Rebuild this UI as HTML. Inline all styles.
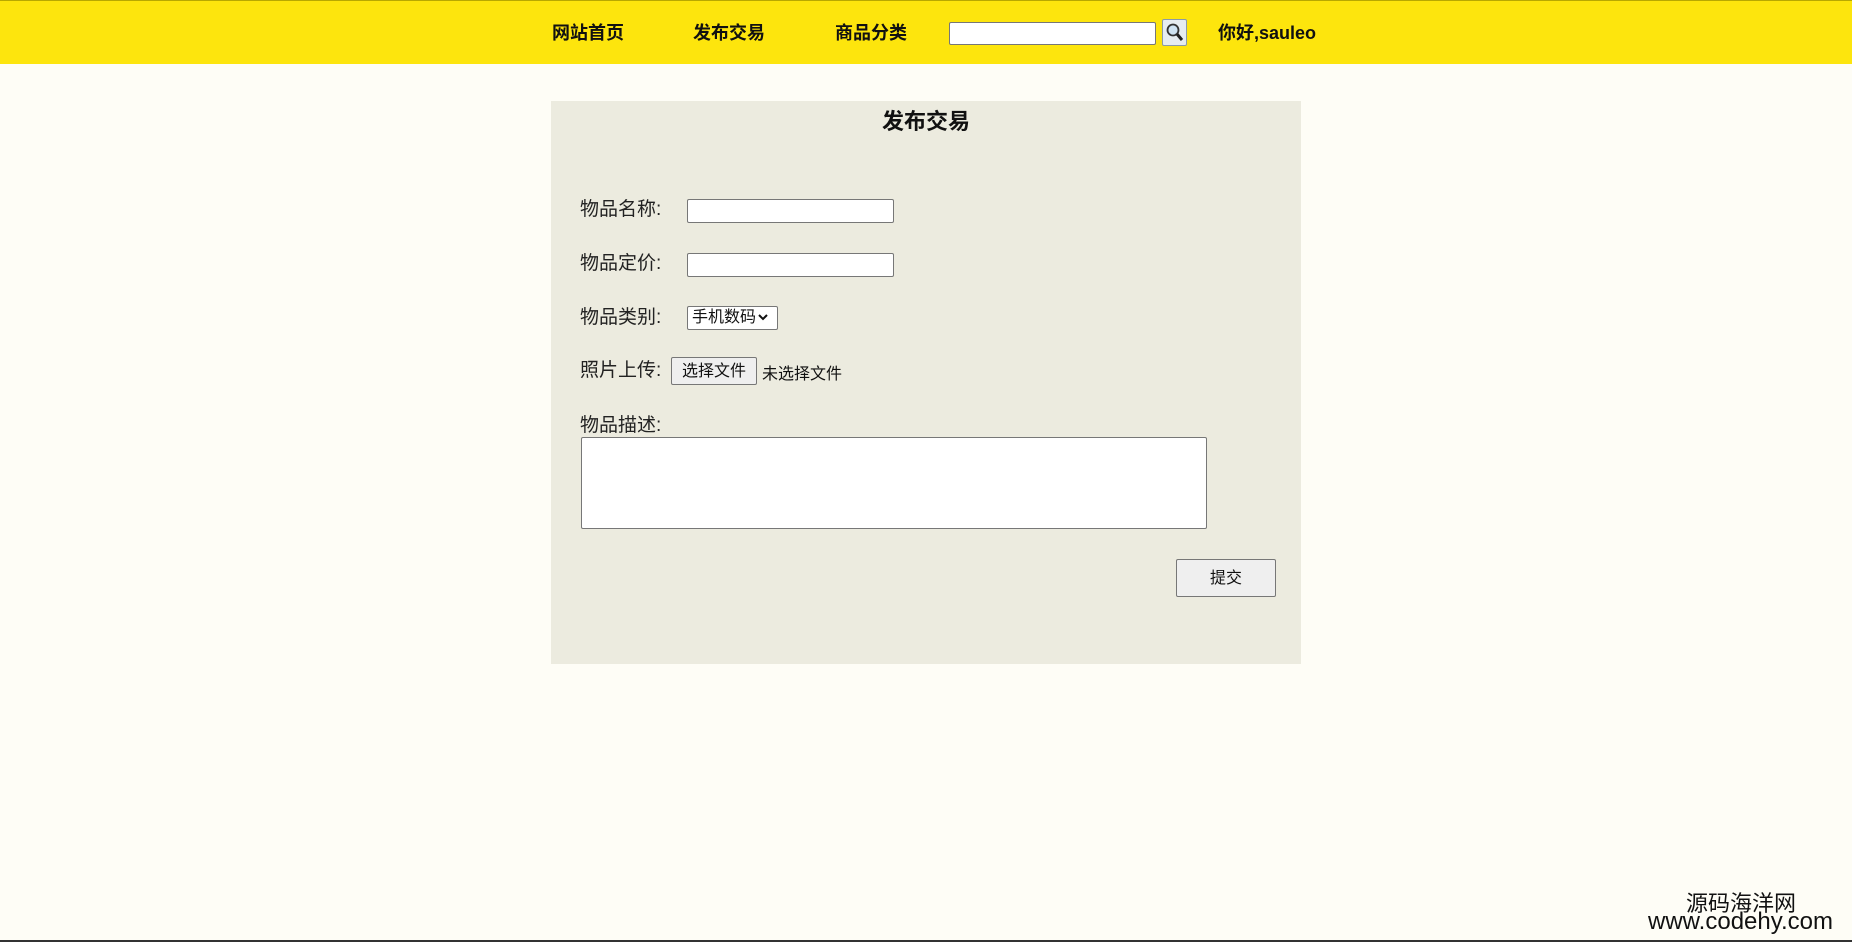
<!DOCTYPE html>
<html><head><meta charset="utf-8"><style>
body{margin:0;width:1852px;height:942px;background:#fefdf6;font-family:"Liberation Sans","Noto Sans CJK SC",sans-serif;position:relative;overflow:hidden}
.abs{position:absolute}
.nav{left:0;top:0;width:1852px;height:63px;background:#fde50d;border-top:1px solid #b8a800}
.ni{font-weight:bold;font-size:18px;color:#111;top:19px}
.panel{left:551px;top:101px;width:750px;height:563px;background:#ecebdf}
.lbl{font-size:19px;color:#222}
.inp{background:#fff;border:1px solid #777;border-radius:2px;box-sizing:border-box}
.btn{background:#efefef;border:1px solid #777;border-radius:2px;box-sizing:border-box;font-size:16px;color:#111;text-align:center}
</style></head><body>
<div class="abs nav"></div>
<div class="abs ni" style="left:552px">网站首页</div>
<div class="abs ni" style="left:693px">发布交易</div>
<div class="abs ni" style="left:835px">商品分类</div>
<div class="abs inp" style="left:949px;top:22px;width:207px;height:23px"></div>
<div class="abs" style="left:1162px;top:19px;width:25px;height:27px;background:#e6ecf0;border:1px solid #8a9aa8;border-radius:2px;box-sizing:border-box">
<svg width="23" height="25" viewBox="0 0 23 25"><circle cx="10" cy="10" r="5.5" fill="#cfe3f2" stroke="#333" stroke-width="1.8"/><line x1="14" y1="14" x2="19" y2="20" stroke="#222" stroke-width="3"/></svg></div>
<div class="abs ni" style="left:1218px">你好,sauleo</div>
<div class="abs panel"></div>
<div class="abs" style="left:551px;width:750px;top:104px;text-align:center;font-weight:bold;font-size:22px;color:#111">发布交易</div>
<div class="abs lbl" style="left:580px;top:194px">物品名称:</div>
<div class="abs inp" style="left:687px;top:199px;width:207px;height:24px"></div>
<div class="abs lbl" style="left:580px;top:248px">物品定价:</div>
<div class="abs inp" style="left:687px;top:253px;width:207px;height:24px"></div>
<div class="abs lbl" style="left:580px;top:302px">物品类别:</div>
<div class="abs inp" style="left:687px;top:306px;width:91px;height:24px;font-size:16px;padding:0 0 0 4px;line-height:22px;color:#111">手机数码<svg width="12" height="10" viewBox="0 0 12 10" style="margin-left:1px"><path d="M2 3 L6 7 L10 3" fill="none" stroke="#111" stroke-width="2"/></svg></div>
<div class="abs lbl" style="left:580px;top:355px">照片上传:</div>
<div class="abs btn" style="left:671px;top:357px;width:86px;height:28px;line-height:28px">选择文件</div>
<div class="abs" style="left:762px;top:360px;font-size:16px;color:#111">未选择文件</div>
<div class="abs lbl" style="left:580px;top:410px">物品描述:</div>
<div class="abs inp" style="left:581px;top:437px;width:626px;height:92px"></div>
<div class="abs btn" style="left:1176px;top:559px;width:100px;height:38px;line-height:38px">提交</div>
<div class="abs" style="left:1686px;top:886px;font-size:22px;color:#111">源码海洋网</div>
<div class="abs" style="left:1648px;top:908px;font-size:24px;color:#111">www.codehy.com</div>
<div class="abs" style="left:0;top:940px;width:1852px;height:2px;background:#333"></div>
</body></html>
